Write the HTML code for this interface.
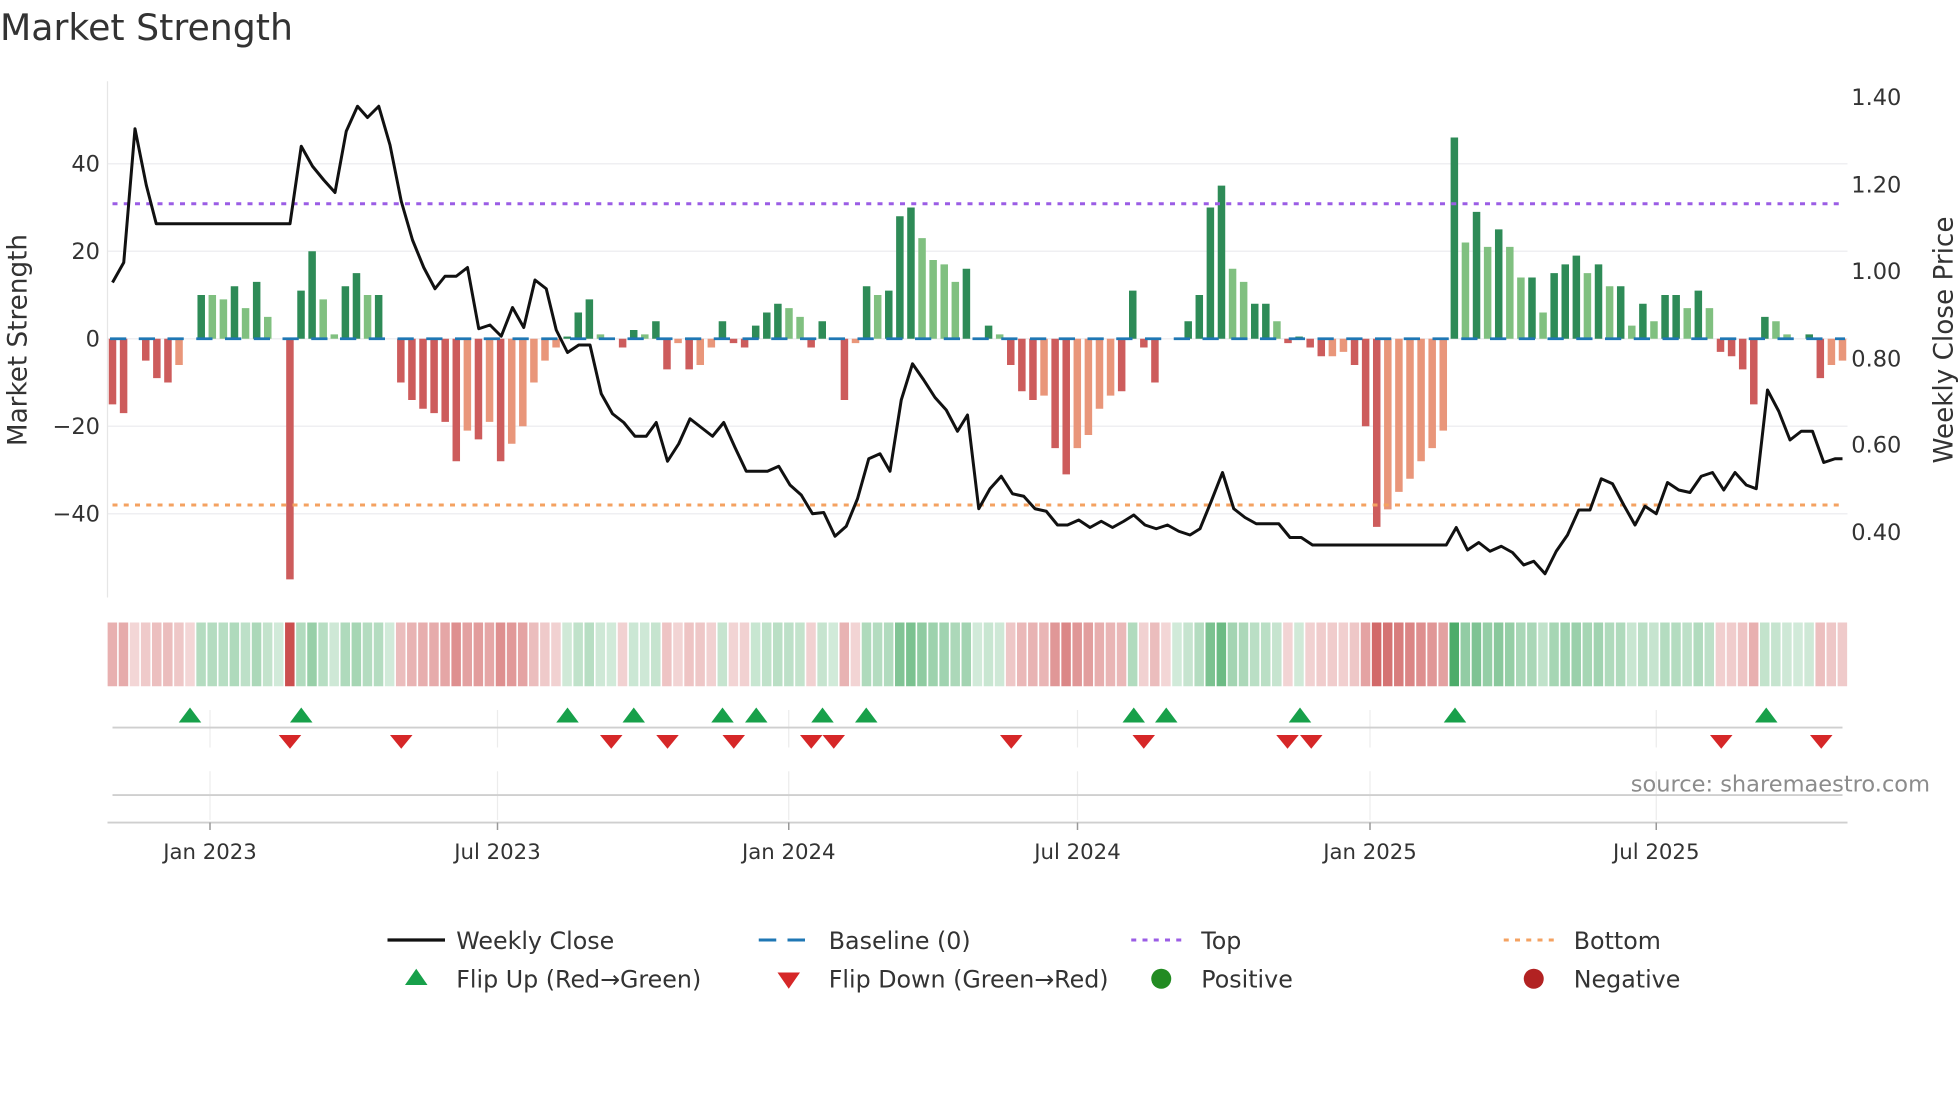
<!DOCTYPE html>
<html><head><meta charset="utf-8">
<style>
html,body{margin:0;padding:0;background:#fff;}
svg{display:block;}
text{font-family:"DejaVu Sans","Liberation Sans",sans-serif;fill:#333;}
</style></head>
<body>
<svg id="s" xmlns="http://www.w3.org/2000/svg" width="1960" height="1102" viewBox="0 0 1568 881.6">
<rect width="1568" height="882" fill="#fff"/>
<text x="0" y="32" font-size="29">Market Strength</text>
<g stroke="#efeff2" stroke-width="1.2">
<line x1="86" y1="131" x2="1478" y2="131"/><line x1="86" y1="201" x2="1478" y2="201"/>
<line x1="86" y1="271" x2="1478" y2="271"/><line x1="86" y1="341" x2="1478" y2="341"/>
<line x1="86" y1="411" x2="1478" y2="411"/>
</g>
<line x1="86" y1="65" x2="86" y2="478" stroke="#e6e6e6" stroke-width="1"/>
<g font-size="18" text-anchor="end">
<text x="80" y="137">40</text><text x="80" y="207">20</text><text x="80" y="277">0</text>
<text x="80" y="347">−20</text><text x="80" y="417">−40</text>
</g>
<g font-size="18">
<text x="1481" y="84">1.40</text><text x="1481" y="154">1.20</text><text x="1481" y="223">1.00</text>
<text x="1481" y="293">0.80</text><text x="1481" y="362">0.60</text><text x="1481" y="432">0.40</text>
</g>
<text transform="translate(21,272) rotate(-90)" font-size="21" text-anchor="middle">Market Strength</text>
<text transform="translate(1562,272) rotate(-90)" font-size="21" text-anchor="middle">Weekly Close Price</text>
<g id="bars"></g>
<line x1="88" y1="271" x2="1476" y2="271" stroke="#1f77b4" stroke-width="2.2" stroke-dasharray="13,10"/>
<line x1="90" y1="163" x2="1476" y2="163" stroke="#9b5de5" stroke-width="2.4" stroke-dasharray="4,5"/>
<line x1="90" y1="404" x2="1476" y2="404" stroke="#f4a261" stroke-width="2.4" stroke-dasharray="4,5"/>
<polyline id="price" fill="none" stroke="#111" stroke-width="2.4" stroke-linejoin="round"/>
<g id="heat"></g>
<g stroke="#ececec" stroke-width="1">
<line x1="168" y1="568" x2="168" y2="598"/><line x1="398" y1="568" x2="398" y2="598"/><line x1="631" y1="568" x2="631" y2="598"/><line x1="862" y1="568" x2="862" y2="598"/><line x1="1096" y1="568" x2="1096" y2="598"/><line x1="1325" y1="568" x2="1325" y2="598"/>
<line x1="168" y1="617" x2="168" y2="656"/><line x1="398" y1="617" x2="398" y2="656"/><line x1="631" y1="617" x2="631" y2="656"/><line x1="862" y1="617" x2="862" y2="656"/><line x1="1096" y1="617" x2="1096" y2="656"/><line x1="1325" y1="617" x2="1325" y2="656"/>
</g>
<line x1="90" y1="582" x2="1474" y2="582" stroke="#cfcfcf" stroke-width="1.5"/>
<line x1="90" y1="636" x2="1474" y2="636" stroke="#cfcfcf" stroke-width="1.5"/>
<line x1="86" y1="658" x2="1478" y2="658" stroke="#cfcfcf" stroke-width="1.5"/>
<g stroke="#999" stroke-width="1.2">
<line x1="168" y1="658" x2="168" y2="664"/><line x1="398" y1="658" x2="398" y2="664"/><line x1="631" y1="658" x2="631" y2="664"/><line x1="862" y1="658" x2="862" y2="664"/><line x1="1096" y1="658" x2="1096" y2="664"/><line x1="1325" y1="658" x2="1325" y2="664"/>
</g>
<g id="flips"></g>
<text x="1544" y="633" font-size="18" text-anchor="end" style="fill:#8c8c8c">source: sharemaestro.com</text>
<g font-size="17" text-anchor="middle">
<text x="168" y="687">Jan 2023</text><text x="398" y="687">Jul 2023</text><text x="631" y="687">Jan 2024</text>
<text x="862" y="687">Jul 2024</text><text x="1096" y="687">Jan 2025</text><text x="1325" y="687">Jul 2025</text>
</g>
<g font-size="19">
<line x1="310" y1="752" x2="356" y2="752" stroke="#111" stroke-width="2.6"/>
<text x="365" y="759">Weekly Close</text>
<line x1="607" y1="752" x2="652" y2="752" stroke="#1f77b4" stroke-width="2.4" stroke-dasharray="14,9"/>
<text x="663" y="759">Baseline (0)</text>
<line x1="905" y1="752" x2="950" y2="752" stroke="#9b5de5" stroke-width="2.4" stroke-dasharray="4,5"/>
<text x="961" y="759">Top</text>
<line x1="1203" y1="752" x2="1248" y2="752" stroke="#f4a261" stroke-width="2.4" stroke-dasharray="4,5"/>
<text x="1259" y="759">Bottom</text>
<polygon points="324,788 342,788 333,775" fill="#17a04a"/>
<text x="365" y="790">Flip Up (Red→Green)</text>
<polygon points="622,778 640,778 631,791" fill="#d62728"/>
<text x="663" y="790">Flip Down (Green→Red)</text>
<circle cx="929" cy="783" r="8" fill="#228b22"/>
<text x="961" y="790">Positive</text>
<circle cx="1227" cy="783" r="8" fill="#b22222"/>
<text x="1259" y="790">Negative</text>
</g>
</svg>
<script>
(function(){
var NS="http://www.w3.org/2000/svg";
function el(t,a,p){var e=document.createElementNS(NS,t);for(var k in a)e.setAttribute(k,a[k]);p.appendChild(e);return e;}
var v=[[-15,'D'],[-17,'D'],[0,'D'],[-5,'D'],[-9,'D'],[-10,'D'],[-6,'L'],[0,'D'],[10,'D'],[10,'L'],[9,'L'],[12,'D'],[7,'L'],[13,'D'],[5,'L'],[0,'D'],
[-55,'D'],[11,'D'],[20,'D'],[9,'L'],[1,'L'],[12,'D'],[15,'D'],[10,'L'],[10,'D'],[0,'D'],[-10,'D'],[-14,'D'],[-16,'D'],[-17,'D'],[-19,'D'],[-28,'D'],
[-21,'L'],[-23,'D'],[-19,'L'],[-28,'D'],[-24,'L'],[-20,'L'],[-10,'L'],[-5,'L'],[-2,'L'],[0.5,'D'],[6,'D'],[9,'D'],[1,'L'],[0,'D'],[-2,'D'],[2,'D'],
[1,'L'],[4,'D'],[-7,'D'],[-1,'L'],[-7,'D'],[-6,'L'],[-2,'L'],[4,'D'],[-1,'D'],[-2,'D'],[3,'D'],[6,'D'],[8,'D'],[7,'L'],[5,'L'],[-2,'D'],[4,'D'],[0,'D'],
[-14,'D'],[-1,'L'],[12,'D'],[10,'L'],[11,'D'],[28,'D'],[30,'D'],[23,'L'],[18,'L'],[17,'L'],[13,'L'],[16,'D'],[0,'D'],[3,'D'],[1,'L'],[-6,'D'],[-12,'D'],
[-14,'D'],[-13,'L'],[-25,'D'],[-31,'D'],[-25,'L'],[-22,'L'],[-16,'L'],[-13,'L'],[-12,'D'],[11,'D'],[-2,'D'],[-10,'D'],[0,'D'],[0,'D'],[4,'D'],[10,'D'],
[30,'D'],[35,'D'],[16,'L'],[13,'L'],[8,'D'],[8,'D'],[4,'L'],[-1,'D'],[0.5,'D'],[-2,'D'],[-4,'D'],[-4,'L'],[-3,'L'],[-6,'D'],[-20,'D'],[-43,'D'],[-39,'L'],
[-35,'L'],[-32,'L'],[-28,'L'],[-25,'L'],[-21,'L'],[46,'D'],[22,'L'],[29,'D'],[21,'L'],[25,'D'],[21,'L'],[14,'L'],[14,'D'],[6,'L'],[15,'D'],[17,'D'],
[19,'D'],[15,'L'],[17,'D'],[12,'L'],[12,'D'],[3,'L'],[8,'D'],[4,'L'],[10,'D'],[10,'D'],[7,'L'],[11,'D'],[7,'L'],[-3,'D'],[-4,'D'],[-7,'D'],[-15,'D'],
[5,'D'],[4,'L'],[1,'L'],[0,'D'],[1,'D'],[-9,'D'],[-6,'L'],[-5,'L']];
var n=v.length, x0=90, x1=1474, step=(x1-x0)/(n-1);
var bars=document.getElementById('bars'), heat=document.getElementById('heat');
for(var i=0;i<n;i++){
 var val=v[i][0],t=v[i][1],x=x0+i*step,h=Math.abs(val)*3.5,col;
 if(val>=0) col=t=='D'?'#2e8b57':'#80c080'; else col=t=='D'?'#cd5c5c':'#e9967a';
 if(h>0.3) el('rect',{x:x-3,y:val>=0?271-h:271,width:6,height:h,fill:col},bars);
 var sgn=val>0?1:(val<0?-1:(i>0?(v[i-1][0]>=0?1:-1):-1));
 var a=Math.min(0.95,0.22+Math.abs(val)/40*0.55);
 var base=sgn>0?[46,158,80]:[200,70,70];
 var c=base.map(function(b){return Math.round(255-(255-b)*a);});
 el('rect',{x:x-3.9,y:498,width:7.6,height:51,fill:'rgb('+c.join(',')+')'},heat);
}
var p=[[90,226],[99,210],[108,103],[117,148],[125,179],[232,179],[241,117],[250,133],[259,144],[268,154],[277,105],[286,85],[294,94],[303,85],[312,116],[321,161],[330,192],[339,214],[348,231],[356,221],[365,221],[374,214],[383,263],[392,260],[401,269],[410,246],[419,262],[428,224],[437,231],[445,264],[454,282],[463,276],[472,276],[481,315],[490,331],[499,338],[508,349],[517,349],[525,338],[534,369],[543,355],[552,335],[561,342],[570,349],[579,338],[588,358],[597,377],[614,377],[623,373],[632,388],[641,396],[650,411],[659,410],[668,429],[677,421],[686,399],[695,367],[704,363],[712,377],[721,320],[730,291],[739,304],[748,318],[757,328],[766,345],[774,332],[783,407],[792,391],[801,381],[810,395],[819,397],[828,407],[837,409],[846,420],[854,420],[863,416],[872,422],[881,417],[890,422],[899,417],[907,412],[916,420],[925,423],[934,420],[943,425],[952,428],[960,423],[969,401],[978,378],[987,407],[996,414],[1005,419],[1023,419],[1032,430],[1041,430],[1050,436],[1157,436],[1165,422],[1174,440],[1183,434],[1192,441],[1201,437],[1210,442],[1219,452],[1227,449],[1236,459],[1245,441],[1254,428],[1263,408],[1272,408],[1281,383],[1290,387],[1299,404],[1308,420],[1316,405],[1325,411],[1334,386],[1343,392],[1352,394],[1361,381],[1370,378],[1379,392],[1388,378],[1397,388],[1405,391],[1414,312],[1423,329],[1432,352],[1441,345],[1450,345],[1459,370],[1468,367],[1474,367]];
document.getElementById('price').setAttribute('points',p.map(function(q){return q.join(',');}).join(' '));
var f=document.getElementById('flips');
[152,241,454,507,578,605,658,693,907,933,1040,1164,1413].forEach(function(x){el('polygon',{points:(x-9)+',578 '+(x+9)+',578 '+x+',566',fill:'#17a04a'},f);});
[232,321,489,534,587,649,667,809,915,1030,1049,1377,1457].forEach(function(x){el('polygon',{points:(x-9)+',588 '+(x+9)+',588 '+x+',599',fill:'#d62728'},f);});
})();
</script>
</body></html>
